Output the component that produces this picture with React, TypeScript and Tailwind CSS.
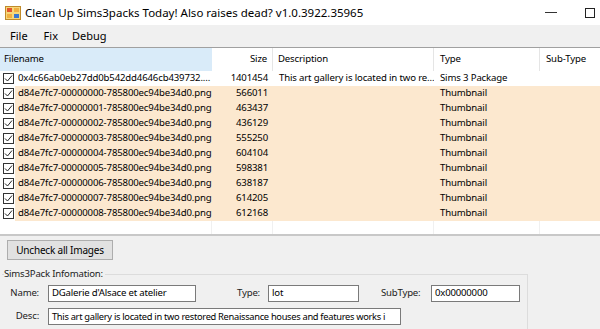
import React from "react";

const rows = [
  { name: "0x4c66ab0eb27dd0b542dd4646cb439732....", size: "1401454", desc: "This art gallery is located in two re...", type: "Sims 3 Package", peach: false },
  { name: "d84e7fc7-00000000-785800ec94be34d0.png", size: "566011", desc: "", type: "Thumbnail", peach: true },
  { name: "d84e7fc7-00000001-785800ec94be34d0.png", size: "463437", desc: "", type: "Thumbnail", peach: true },
  { name: "d84e7fc7-00000002-785800ec94be34d0.png", size: "436129", desc: "", type: "Thumbnail", peach: true },
  { name: "d84e7fc7-00000003-785800ec94be34d0.png", size: "555250", desc: "", type: "Thumbnail", peach: true },
  { name: "d84e7fc7-00000004-785800ec94be34d0.png", size: "604104", desc: "", type: "Thumbnail", peach: true },
  { name: "d84e7fc7-00000005-785800ec94be34d0.png", size: "598381", desc: "", type: "Thumbnail", peach: true },
  { name: "d84e7fc7-00000006-785800ec94be34d0.png", size: "638187", desc: "", type: "Thumbnail", peach: true },
  { name: "d84e7fc7-00000007-785800ec94be34d0.png", size: "614205", desc: "", type: "Thumbnail", peach: true },
  { name: "d84e7fc7-00000008-785800ec94be34d0.png", size: "612168", desc: "", type: "Thumbnail", peach: true },
];

function Check() {
  return (
    <div className="w-[11px] h-[11px] border border-[#333] bg-white flex items-center justify-center shrink-0">
      <svg width="9" height="9" viewBox="0 0 9 9">
        <path d="M1 4.5 L3.5 7 L8 1.5" fill="none" stroke="#222" strokeWidth="1" />
      </svg>
    </div>
  );
}

function AppIcon() {
  return (
    <svg width="16" height="14" viewBox="0 0 16 14">
      <rect x="0.5" y="0.5" width="15" height="13" fill="#f6d77a" stroke="#c08a2a" />
      <rect x="2" y="2" width="5" height="4" fill="#e2552c" />
      <rect x="9" y="2" width="5" height="4" fill="#f0b040" />
      <rect x="2" y="8" width="5" height="4" fill="#f0b040" />
      <rect x="9" y="8" width="5" height="4" fill="#3a78d0" />
    </svg>
  );
}

export default function App() {
  return (
    <div className="w-[600px] h-[329px] overflow-hidden bg-[#f0f0f0] flex flex-col text-black" style={{ fontFamily: '"Segoe UI", "Noto Sans", "Liberation Sans", sans-serif' }}>
      {/* title bar */}
      <div className="h-[25px] bg-white flex items-center shrink-0">
        <div className="w-[23px] flex justify-center pl-[2px]"><AppIcon /></div>
        <span className="text-[11.5px] ml-[2px]">Clean Up Sims3packs Today! Also raises dead? v1.0.3922.35965</span>
        <div className="flex-1" />
        <div className="w-[12px] h-px bg-[#333] mr-[28px]" />
        <div className="w-[10px] h-[10px] border border-[#222] mr-[5px]" />
      </div>
      {/* menu */}
      <div className="h-[23px] bg-[#f0f0f0] flex items-center text-[11px] shrink-0 border-b border-[#a0a0a0]">
        <span className="ml-[10px]">File</span>
        <span className="ml-[16px]">Fix</span>
        <span className="ml-[14px]">Debug</span>
      </div>
      {/* list view */}
      <div className="h-[188px] bg-white shrink-0 flex flex-col text-[9.6px] tracking-[-0.15px] border-b-2 border-[#c8c8c8]">
        <div className="h-[23px] flex items-center shrink-0">
          <div className="w-[212px] h-full bg-[#d9ebf9] flex items-center pl-[4px]">Filename</div>
          <div className="w-[61px] h-full flex items-center justify-end pr-[5px] border-r border-[#e5e5e5]">Size</div>
          <div className="w-[161px] h-full flex items-center pl-[5px] border-r border-[#e5e5e5]">Description</div>
          <div className="w-[106px] h-full flex items-center pl-[6px] border-r border-[#e5e5e5]">Type</div>
          <div className="flex-1 h-full flex items-center pl-[6px]">Sub-Type</div>
        </div>
        {rows.map((r) => (
          <div key={r.name} className="h-[15px] flex items-center shrink-0">
            <div className="w-[15px] h-full flex items-center pl-[3px] bg-white"><Check /></div>
            <div className={`flex-1 h-full flex items-center ${r.peach ? "bg-[#fce8cf]" : "bg-white"}`}>
              <div className="w-[197px] pl-[3px] whitespace-nowrap overflow-hidden">{r.name}</div>
              <div className="w-[61px] text-right pr-[5px]">{r.size}</div>
              <div className="w-[161px] pl-[6px] whitespace-nowrap overflow-hidden">{r.desc}</div>
              <div className="w-[106px] pl-[6px]">{r.type}</div>
              <div className="flex-1" />
            </div>
          </div>
        ))}
        <div className="flex-1 flex">
          <div className="w-[212px] border-r border-[#f0f0f0]" />
          <div className="w-[61px] border-r border-[#f0f0f0]" />
          <div className="w-[161px] border-r border-[#f0f0f0]" />
          <div className="w-[106px] border-r border-[#f0f0f0]" />
        </div>
      </div>
      {/* bottom form */}
      <div className="flex-1 flex flex-col text-[9.6px] tracking-[-0.2px] text-[#222]">
        <div className="pl-[7px] pt-[4px]">
          <button className="w-[106px] h-[20px] bg-[#e1e1e1] border border-[#adadad] text-[10px] text-black">Uncheck all Images</button>
        </div>
        <div className="relative ml-[2px] mt-[14px] w-[526px] flex-1 border-t border-r border-[#dcdcdc]">
          <span className="absolute -top-[8px] left-[2px] bg-[#f0f0f0] pr-[2px] leading-[14px]">Sims3Pack Infomation:</span>
          <div className="flex items-center mt-[10px] h-[17px]">
            <span className="w-[37px] text-right">Name:</span>
            <div className="ml-[9px] w-[148px] h-[17px] bg-white border border-[#7a7a7a] flex items-center pl-[3px] text-black">DGalerie d'Alsace et atelier</div>
            <span className="ml-[40px] w-[24px] text-right">Type:</span>
            <div className="ml-[8px] w-[91px] h-[17px] bg-white border border-[#7a7a7a] flex items-center pl-[3px] text-black">lot</div>
            <span className="ml-[22px] w-[44px]">SubType:</span>
            <div className="ml-[6px] w-[89px] h-[17px] bg-white border border-[#7a7a7a] flex items-center pl-[3px] text-black">0x00000000</div>
          </div>
          <div className="flex items-center mt-[6px] h-[17px]">
            <span className="w-[37px] text-right">Desc:</span>
            <div className="ml-[9px] w-[353px] h-[17px] bg-white border border-[#7a7a7a] flex items-center pl-[3px] text-black text-[9.3px] tracking-[-0.3px] whitespace-nowrap overflow-hidden">This art gallery is located in two restored Renaissance houses and features works i</div>
          </div>
        </div>
      </div>
    </div>
  );
}
